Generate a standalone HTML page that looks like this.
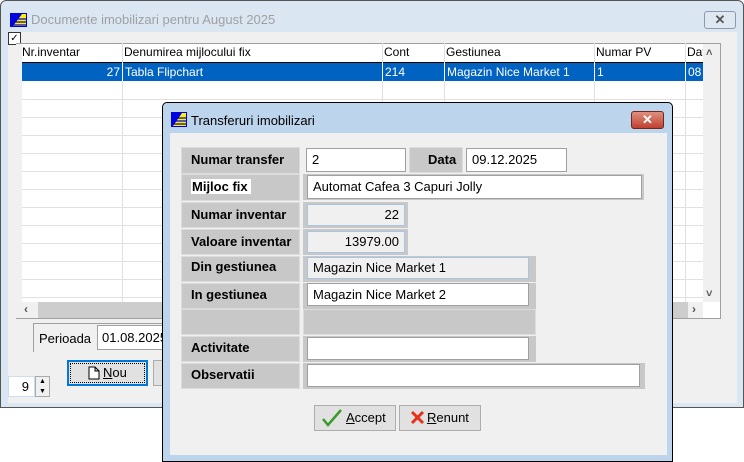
<!DOCTYPE html>
<html><head><style>
*{margin:0;padding:0;box-sizing:border-box}
body{width:744px;height:453px;background:#fff;position:relative;overflow:hidden;font-family:"Liberation Sans",sans-serif;font-size:12px;color:#000}
.a{position:absolute}
.lbl{position:absolute;background:#c8c8c8;border:1px solid #dcdcdc;font-weight:bold;font-size:13px;padding-left:9px;line-height:24px}
.in{position:absolute;background:#fff;border:1px solid #a0a0a0;font-size:13px;line-height:22px;padding:0 5px}
.fr{position:absolute;background:#c8c8c8}
.vl{position:absolute;top:43px;width:1px;height:259px;background:#e0e0e0}
.hl{position:absolute;left:22px;width:681px;height:1px;background:#e0e0e0}
</style></head><body>
<!-- main window -->
<div class="a" style="left:0;top:0;width:744px;height:408px;background:#dbe6f3;border:1px solid #555;border-radius:6px 6px 0 0"></div>
<div class="a" style="left:8px;top:32px;width:729px;height:371px;background:#f0f0f0"></div>
<div class="a" style="left:10px;top:13px;width:17px;height:14px;background:#0000e0"></div>
<svg class="a" style="left:10px;top:13px" width="17" height="14"><path d="M3 13L12 1L16 1L16 13Z" fill="#ffef00"/><path d="M7 6H16M5 9H16M3 12H16" stroke="#0000e0" stroke-width="1.3"/></svg>
<div class="a" style="left:31px;top:12px;font-size:13px;color:#a0a0a0">Documente imobilizari  pentru August 2025</div>
<div class="a" style="left:704px;top:11px;width:32px;height:18px;border:1px solid #8a9bb0;border-radius:3px;background:#dfe7f1;color:#555;text-align:center;font-weight:bold;font-size:13px;line-height:16px">✕</div>
<div class="a" style="left:8px;top:32px;width:13px;height:13px;border:1px solid #333;background:#fff;font-size:10px;line-height:11px;text-align:center">✓</div>
<!-- grid -->
<div class="a" style="left:16px;top:43px;width:705px;height:276px;background:#fff;border:1px solid #a0a0a0"></div>
<div class="a" style="left:16px;top:44px;width:6px;height:274px;background:#f0f0f0"></div>
<div class="a" style="left:22px;top:62px;width:681px;height:1px;background:#000"></div>
<div class="a" style="left:22px;top:63px;width:681px;height:18px;background:#0063c1"></div>
<div class="hl" style="top:99px"></div><div class="hl" style="top:117px"></div><div class="hl" style="top:135px"></div><div class="hl" style="top:153px"></div><div class="hl" style="top:171px"></div><div class="hl" style="top:189px"></div><div class="hl" style="top:207px"></div><div class="hl" style="top:225px"></div><div class="hl" style="top:243px"></div><div class="hl" style="top:261px"></div><div class="hl" style="top:279px"></div><div class="hl" style="top:297px"></div>
<div class="vl" style="left:122px"></div><div class="vl" style="left:382px"></div><div class="vl" style="left:444px"></div><div class="vl" style="left:594px"></div><div class="vl" style="left:685px"></div>
<div class="a" style="left:22px;top:45px;font-size:12px">Nr.inventar</div>
<div class="a" style="left:124px;top:45px">Denumirea mijlocului fix</div>
<div class="a" style="left:384px;top:45px">Cont</div>
<div class="a" style="left:446px;top:45px">Gestiunea</div>
<div class="a" style="left:596px;top:45px">Numar PV</div>
<div class="a" style="left:687px;top:45px;width:16px;overflow:hidden">Data</div>
<div class="a" style="left:22px;top:65px;width:98px;text-align:right;color:#fff">27</div>
<div class="a" style="left:122px;top:63px;width:1px;height:18px;background:#fff"></div>
<div class="a" style="left:382px;top:63px;width:1px;height:18px;background:#fff"></div>
<div class="a" style="left:444px;top:63px;width:1px;height:18px;background:#fff"></div>
<div class="a" style="left:594px;top:63px;width:1px;height:18px;background:#fff"></div>
<div class="a" style="left:685px;top:63px;width:1px;height:18px;background:#fff"></div>
<div class="a" style="left:125px;top:65px;color:#fff">Tabla Flipchart</div>
<div class="a" style="left:385px;top:65px;color:#fff">214</div>
<div class="a" style="left:447px;top:65px;color:#fff">Magazin Nice Market 1</div>
<div class="a" style="left:597px;top:65px;color:#fff">1</div>
<div class="a" style="left:688px;top:65px;color:#fff;width:15px;overflow:hidden">08</div>
<div class="a" style="left:703px;top:44px;width:17px;height:258px;background:#f0f0f0"></div>
<div class="a" style="left:706px;top:47px;color:#555;font-size:11px;font-weight:bold">˄</div>
<div class="a" style="left:706px;top:288px;color:#555;font-size:11px;font-weight:bold">˅</div>
<div class="a" style="left:17px;top:302px;width:686px;height:16px;background:#f0f0f0"></div>
<div class="a" style="left:38px;top:302px;width:650px;height:16px;background:#cdcdcd"></div>
<div class="a" style="left:24px;top:302px;color:#555;font-size:12px;font-weight:bold">‹</div>
<div class="a" style="left:692px;top:302px;color:#555;font-size:12px;font-weight:bold">›</div>
<!-- perioada -->
<div class="a" style="left:33px;top:323px;width:140px;height:29px;border-left:1px solid #a0a0a0;border-top:1px solid #a0a0a0"></div>
<div class="a" style="left:39px;top:331px;font-size:13px">Perioada</div>
<div class="a" style="left:97px;top:325px;width:70px;height:25px;background:#fff;border:1px solid #a0a0a0;font-size:13px;line-height:23px;padding-left:4px;overflow:hidden;white-space:nowrap">01.08.2025</div>
<div class="a" style="left:67px;top:360px;width:81px;height:26px;border:2px solid #0078d7;background:#e1e1e1"></div>
<div class="a" style="left:70px;top:363px;width:75px;height:20px;border:1px dotted #000"></div>
<svg class="a" style="left:88px;top:366px" width="12" height="14"><path d="M1 1H7L11 5V13H1Z M7 1V5H11" fill="#fff" stroke="#000"/></svg>
<div class="a" style="left:103px;top:365px;font-size:13px"><u>N</u>ou</div>
<div class="a" style="left:153px;top:360px;width:12px;height:26px;border:1px solid #adadad;background:#e1e1e1"></div>
<div class="a" style="left:8px;top:376px;width:27px;height:21px;background:#fff;border:1px solid #cde;font-size:13px;text-align:right;padding-right:5px;line-height:20px">9</div>
<div class="a" style="left:35px;top:376px;width:15px;height:21px;border:1px solid #aaa;background:#f0f0f0;font-size:7px;text-align:center;line-height:10px">▲<br>▼</div>
<!-- dialog -->
<div class="a" style="left:162px;top:102px;width:511px;height:360px;background:#bcd4ec;border:1px solid #000;border-radius:5px 5px 0 0"></div>
<div class="a" style="left:170px;top:133px;width:497px;height:322px;background:#f0f0f0"></div>
<div class="a" style="left:171px;top:112px;width:16px;height:15px;background:#0000e0"></div>
<svg class="a" style="left:171px;top:112px" width="16" height="15"><path d="M2 14L11 1L15 1L15 14Z" fill="#ffef00"/><path d="M6 6H15M4 9H15M2 12H15" stroke="#0000e0" stroke-width="1.3"/></svg>
<div class="a" style="left:191px;top:113px;font-size:13px">Transferuri  imobilizari</div>
<div class="a" style="left:631px;top:111px;width:33px;height:18px;border:1px solid #6b2a1f;border-radius:3px;background:linear-gradient(#e09080,#c04030);color:#fff;text-align:center;font-weight:bold;font-size:13px;line-height:16px">✕</div>

<div class="lbl" style="left:181px;top:147px;width:119px;height:27px">Numar transfer</div>
<div class="in" style="left:306px;top:148px;width:100px;height:24px">2</div>
<div class="lbl" style="left:409px;top:147px;width:54px;height:26px;padding-left:18px">Data</div>
<div class="in" style="left:466px;top:148px;width:101px;height:24px">09.12.2025</div>

<div class="lbl" style="left:181px;top:174px;width:119px;height:27px"><span style="background:#fff;padding:0 3px 0 1px">Mijloc fix</span></div>
<div class="fr" style="left:303px;top:174px;width:341px;height:26px"></div>
<div class="in" style="left:307px;top:175px;width:335px;height:24px">Automat Cafea 3 Capuri Jolly</div>

<div class="lbl" style="left:181px;top:202px;width:119px;height:26px">Numar inventar</div>
<div class="fr" style="left:303px;top:202px;width:105px;height:26px"></div>
<div class="in" style="left:307px;top:204px;width:98px;height:22px;background:#f0f0f0;border-color:#a8c4e0;text-align:right;line-height:20px">22</div>
<div class="lbl" style="left:181px;top:229px;width:119px;height:26px">Valoare inventar</div>
<div class="fr" style="left:303px;top:229px;width:105px;height:26px"></div>
<div class="in" style="left:307px;top:231px;width:98px;height:22px;background:#f0f0f0;border-color:#a8c4e0;text-align:right;line-height:20px">13979.00</div>

<div class="lbl" style="left:181px;top:256px;width:119px;height:26px;line-height:20px">Din gestiunea</div>
<div class="fr" style="left:303px;top:256px;width:233px;height:26px"></div>
<div class="in" style="left:307px;top:257px;width:222px;height:22px;background:#f0f0f0;border-color:#a8c4e0;line-height:20px">Magazin Nice Market 1</div>
<div class="lbl" style="left:181px;top:283px;width:119px;height:26px;line-height:22px">In gestiunea</div>
<div class="fr" style="left:303px;top:283px;width:233px;height:26px"></div>
<div class="in" style="left:307px;top:283px;width:222px;height:23px;line-height:21px">Magazin Nice Market 2</div>
<div class="lbl" style="left:181px;top:309px;width:119px;height:26px"></div>
<div class="fr" style="left:303px;top:309px;width:233px;height:26px;border:1px solid #dcdcdc"></div>
<div class="lbl" style="left:181px;top:336px;width:119px;height:26px;line-height:22px">Activitate</div>
<div class="fr" style="left:303px;top:336px;width:233px;height:26px"></div>
<div class="in" style="left:307px;top:337px;width:222px;height:23px"></div>
<div class="lbl" style="left:181px;top:363px;width:119px;height:26px;line-height:22px">Observatii</div>
<div class="fr" style="left:303px;top:363px;width:342px;height:26px"></div>
<div class="in" style="left:307px;top:364px;width:333px;height:23px"></div>

<div class="a" style="left:314px;top:405px;width:82px;height:26px;border:1px solid #adadad;background:#e1e1e1"></div>
<svg class="a" style="left:322px;top:409px" width="20" height="18"><path d="M1 10L6 16L19 1" fill="none" stroke="#3a9a2a" stroke-width="2.5"/></svg>
<div class="a" style="left:346px;top:410px;font-size:13px"><u>A</u>ccept</div>
<div class="a" style="left:399px;top:405px;width:82px;height:26px;border:1px solid #adadad;background:#e1e1e1"></div>
<svg class="a" style="left:410px;top:410px" width="15" height="15"><path d="M2 2L13 13M13 2L2 13" stroke="#e8301a" stroke-width="3"/></svg>
<div class="a" style="left:427px;top:410px;font-size:13px"><u>R</u>enunt</div>
</body></html>
